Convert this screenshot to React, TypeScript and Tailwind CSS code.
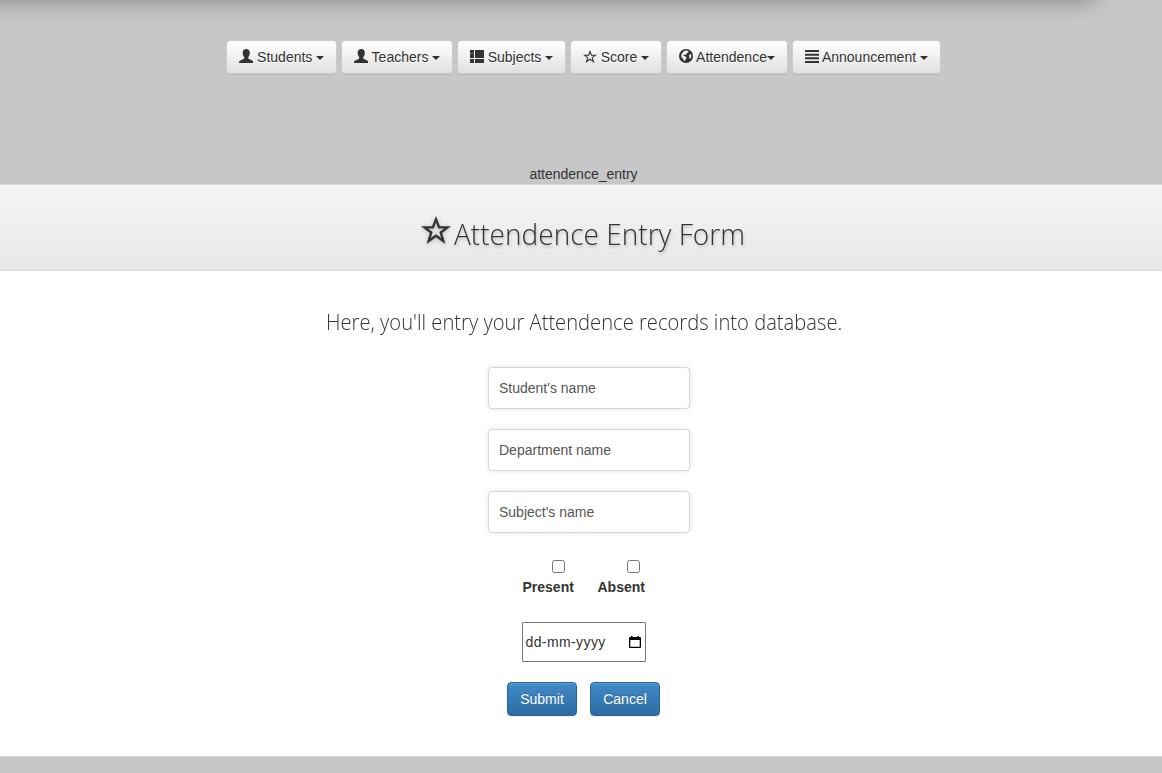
import type { ReactNode } from "react";

function User() {
  return (
    <svg viewBox="0 0 15 14" preserveAspectRatio="none" className="h-[14px] w-[14.500px]" fill="currentColor">
      <path d="M7.500 0C9.800 0 11.200 1.500 11.200 3.800c0 1.800-.7 3.500-1.600 4.400-.3.900 0 1.500.8 1.900l3.200 1.300c1 .4 1.300 1 1.300 2.600H.1c0-1.600.3-2.200 1.300-2.600l3.200-1.300c.8-.4 1.100-1 .8-1.900C4.500 7.300 3.800 5.600 3.800 3.800 3.800 1.500 5.200 0 7.500 0Z" />
    </svg>
  );
}

function ThList() {
  return (
    <svg viewBox="0 0 14 13" className="h-[13px] w-[14px]" fill="currentColor">
      <path d="M0 0h4v3.800H0zM5 0h9v8H5zM0 4h4v4H0zM0 9h4v4H0zM5 9h9v4H5z" />
    </svg>
  );
}

function Star({ className, inner }: { className: string; inner: string }) {
  return (
    <svg viewBox="0 0 30 28" className={className} fill="currentColor" fillRule="evenodd">
      <path d={"M15 0l4 10.200h11l-8.900 6.700L24.500 28 15 21.300 5.500 28l3.400-11.100L0 10.200h11z" + inner} />
    </svg>
  );
}

function Globe() {
  return (
    <svg viewBox="0 0 14 14" className="h-[14px] w-[14px]">
      <circle cx="7" cy="7" r="7" fill="#333" />
      <path
        d="M5 2 7.300 1.500l2 .5.2 1.300-1.300.5-.8 1.500-1.300.6-.9-.5-.8.9.5.800 1.500.300 1.200 1.100-.5 1.200-1 1-.2 1.200-1.100-.5-.9-1.900-1.400-1.200-.3-1.800.6-1.800 1-1.300zM11.400 5l.8 1.200v1.800l-.7 1.300-1 .3-.4-1.200.4-1-.4-1 .5-1z"
        fill="#f2f2f2"
      />
    </svg>
  );
}

function Lines() {
  return (
    <svg viewBox="0 0 14 13" className="h-[13px] w-[14px]" fill="currentColor">
      <path d="M0 0h14v2H0zM0 3.700h14v2H0zM0 7.300h14v2H0zM0 11h14v2H0z" />
    </svg>
  );
}

function NavButton({ width, icon, label, gap, caret }: {
  width: string; icon: ReactNode; label: string; gap: string; caret: string;
}) {
  return (
    <button
      className={`flex h-[34px] items-center justify-center rounded-[4px] border border-[#ccc] bg-linear-to-b from-white to-[#e0e0e0] shadow-[inset_0_1px_0_rgba(255,255,255,0.15),0_1px_1px_rgba(0,0,0,0.075)] [text-shadow:0_1px_0_#fff] ${width}`}
    >
      <span className="-mt-[2px]">{icon}</span>
      <span className={gap}>{label}</span>
      <span className={`mt-[2px] h-0 w-0 border-x-4 border-t-4 border-x-transparent border-t-[#333] ${caret}`} />
    </button>
  );
}

const field =
  "block h-[42px] w-[202px] rounded-[4px] border border-[#d8d8d8] bg-white px-[10px] text-[14px] text-[#333] shadow-[0_0_5px_rgba(0,0,0,0.1)] outline-none placeholder:text-[#555] placeholder:opacity-100";

const primary =
  "h-[34px] w-[70px] rounded-[4px] border border-[#2b669a] bg-linear-to-b from-[#428bca] to-[#2d6ca2] text-white shadow-[inset_0_1px_0_rgba(255,255,255,0.15),0_1px_1px_rgba(0,0,0,0.075)] [text-shadow:0_-1px_0_rgba(0,0,0,0.2)]";

const box = "block h-[13px] w-[13px] appearance-none rounded-[2.500px] border border-[#767676] bg-white";

export default function App() {
  return (
    <div className="relative flex h-[773px] w-full flex-col overflow-hidden bg-[#c7c7c7] font-['Liberation_Sans',Arial,sans-serif] text-[14px] leading-[20px] text-[#333]">
      <div className="pointer-events-none absolute -top-[63px] -left-[40px] h-[60px] w-[1134px] shadow-[0_0_25px_rgba(0,0,0,0.48)]" />

      <nav className="ml-[226px] flex h-[164px] items-start pt-[40px]">
        <NavButton width="w-[111px]" icon={<User />} label="Students" gap="ml-[4px]" caret="ml-[4px]" />
        <NavButton width="ml-[4px] w-[112px]" icon={<User />} label="Teachers" gap="ml-[3.500px]" caret="ml-[4px]" />
        <NavButton width="ml-[4px] w-[109px]" icon={<ThList />} label="Subjects" gap="ml-[4px]" caret="ml-[4px]" />
        <NavButton
          width="ml-[4px] w-[92px]"
          icon={<Star className="h-[13px] w-[14px]" inner="M15 6.500l-2.200 6H6.500l5 3.800-1.900 6.100 5.400-3.900 5.400 3.900-1.900-6.100 5-3.800h-6.300z" />}
          label="Score"
          gap="ml-[4px]"
          caret="ml-[4px]"
        />
        <NavButton width="ml-[4px] w-[122px]" icon={<Globe />} label="Attendence" gap="ml-[3px]" caret="ml-0" />
        <NavButton width="ml-[4px] w-[149px]" icon={<Lines />} label="Announcement" gap="ml-[3px]" caret="ml-[4px]" />
      </nav>

      <div className="h-[20px] pl-[5px] text-center">attendence_entry</div>

      <header className="flex h-[87px] border-y border-[#d8d8d8] bg-linear-to-b from-[#f5f5f5] to-[#e8e8e8] pl-[421px]">
        <Star
          className="mt-[31px] h-[28px] w-[30px] [filter:drop-shadow(0_1px_2px_rgba(0,0,0,0.25))]"
          inner="M15 6.500l-2.200 6H6.800l4.800 3.600-1.800 5.900 5.200-3.700 5.200 3.700-1.800-5.900 4.800-3.600h-6z"
        />
        <h1 className="ml-[2.500px] origin-left scale-x-[0.935] pt-[28px] font-['Open_Sans',sans-serif] text-[30px] leading-[42px] font-light whitespace-nowrap [text-shadow:1px_2px_3px_rgba(0,0,0,0.2)]">
          Attendence Entry Form
        </h1>
      </header>

      <main className="h-[486px] border-b border-[#d8d8d8] bg-white">
        <h2 className="ml-[325.500px] origin-left scale-x-[0.917] pt-[35px] font-['Open_Sans',sans-serif] text-[22px] leading-[30px] font-light whitespace-nowrap">
          Here, you'll entry your Attendence records into database.
        </h2>
        <form className="ml-[488px] pt-[31px]" onSubmit={(event) => event.preventDefault()}>
          <div className="flex flex-col gap-[20px]">
            <input className={field} placeholder="Student's name" />
            <input className={field} placeholder="Department name" />
            <input className={field} placeholder="Subject's name" />
          </div>
          <div className="ml-[34px] flex pt-[27px] font-bold">
            <label className="w-[75px]">
              <input type="checkbox" className={`ml-[30px] ${box}`} />
              <span className="mt-[4px] ml-[0.5px] block">Present</span>
            </label>
            <label>
              <input type="checkbox" className={`ml-[30px] ${box}`} />
              <span className="mt-[4px] ml-[0.5px] block">Absent</span>
            </label>
          </div>
          <div className="mt-[25px] ml-[34px] flex h-[40px] w-[124px] items-center justify-between rounded-[1px] border border-[#767676] pr-[4px] pl-[2.500px]">
            <span className="tracking-[0.4px]">dd-mm-yyyy</span>
            <svg viewBox="0 0 12 13" className="h-[13px] w-[12px]" fill="#000">
              <path fillRule="evenodd" d="M2 0h1.500v1h5V0H10v1h1q1 0 1 1v9q0 1-1 1H1q-1 0-1-1V2q0-1 1-1h1zM1.300 4v6.700h9.400V4z" />
            </svg>
          </div>
          <div className="mt-[20px] ml-[19px] flex gap-[13px]">
            <button type="submit" className={primary}>Submit</button>
            <button type="button" className={primary}>Cancel</button>
          </div>
        </form>
      </main>
    </div>
  );
}
